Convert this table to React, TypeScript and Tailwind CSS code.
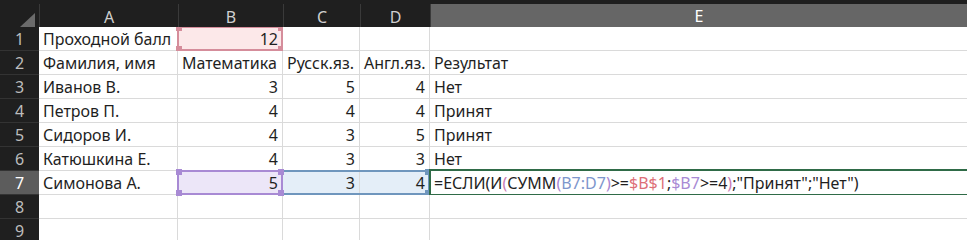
import React from "react";

const cols = ["A", "B", "C", "D", "E"];

type Hl = "pink" | "purple" | "blueL" | "blueR" | "active" | undefined;

const rows: string[][] = [
    ["Проходной балл", "12", "", "", ""],
    ["Фамилия, имя", "Математика", "Русск.яз.", "Англ.яз.", "Результат"],
    ["Иванов В.", "3", "5", "4", "Нет"],
    ["Петров П.", "4", "4", "4", "Принят"],
    ["Сидоров И.", "4", "3", "5", "Принят"],
    ["Катюшкина Е.", "4", "3", "3", "Нет"],
    ["Симонова А.", "5", "3", "4", "formula"],
    ["", "", "", "", ""],
    ["", "", "", "", ""],
];

// which cells carry a range highlight, keyed "row-col"
const highlights: Record<string, Hl> = {
    "0-1": "pink",
    "6-1": "purple",
    "6-2": "blueL",
    "6-3": "blueR",
    "6-4": "active",
};

function Formula() {
    return (
        <span>
            =ЕСЛИ(И<span className="text-[#c97bb6]">(</span>СУММ<span className="text-[#a985d2]">(</span>
            <span className="text-[#7d96cc]">B7:D7</span>
            <span className="text-[#a985d2]">)</span>&gt;=<span className="text-[#dd6f78]">$B$1</span>;
            <span className="text-[#a88ad4]">$B7</span>&gt;=4<span className="text-[#c97bb6]">)</span>;"Принят";"Нет")
        </span>
    );
}

function Handles({ color, left = true }: { color: string; left?: boolean }) {
    const h = "absolute w-[6px] h-[6px] " + color;
    return (
        <>
            {left && <div className={h + " -left-[3px] -top-[3px]"} />}
            <div className={h + " -right-[3px] -top-[3px]"} />
            {left && <div className={h + " -left-[3px] -bottom-[3px]"} />}
            <div className={h + " -right-[3px] -bottom-[3px]"} />
        </>
    );
}

function Cell({ value, hl, last }: { value: string; hl: Hl; last: boolean }) {
    const num = /^\d+$/.test(value);
    const bg =
        hl === "pink" ? "bg-[#fce8e9]" :
        hl === "purple" ? "bg-[#ece6f8]" :
        hl === "blueL" || hl === "blueR" ? "bg-[#e4eef8]" : "bg-white";
    return (
        <div
            className={
                "relative h-[24px] flex items-center px-[4px] border-b border-[#dadada] whitespace-nowrap " +
                (last ? "" : "border-r ") +
                (num ? "justify-end " : "justify-start ") +
                bg
            }
        >
            {value === "formula" ? <Formula /> : <span className="relative z-10">{value}</span>}
            {hl === "pink" && (
                <div className="absolute -left-px -top-px -right-px -bottom-px border-2 border-[#d58d9b]">
                    <Handles color="bg-[#d58d9b]" />
                </div>
            )}
            {hl === "purple" && (
                <div className="absolute -left-px -top-px -right-px -bottom-px border-2 border-[#a88ad4] z-20">
                    <Handles color="bg-[#a88ad4]" />
                </div>
            )}
            {hl === "blueL" && (
                <div className="absolute left-0 -top-px -right-px -bottom-px border-y-2 border-[#6f96bd]" />
            )}
            {hl === "blueR" && (
                <div className="absolute -left-px -top-px -right-px -bottom-px border-y-2 border-r-2 border-[#6f96bd]">
                    <Handles color="bg-[#6f96bd]" left={false} />
                </div>
            )}
            {hl === "active" && (
                <div className="absolute -left-px -top-[2px] -right-[6px] -bottom-[2px] border-2 border-[#2f6b47]" />
            )}
        </div>
    );
}

export default function App() {
    return (
        <div className="w-[967px] h-[240px] overflow-hidden bg-white font-['Noto_Sans',sans-serif] text-[16px] text-[#1f1f1f]">
            {/* column headers */}
            <div className="h-[27px] bg-[#1f1f1f] pt-[4px] grid grid-cols-[39px_139px_105px_77px_70px_1fr]">
                <div className="flex items-end justify-end pr-[4px] pb-[3px]">
                    <div className="w-0 h-0 border-l-[15px] border-l-transparent border-b-[14px] border-b-[#6b6b6b]" />
                </div>
                {cols.map(c => (
                    <div
                        key={c}
                        className={
                            "flex items-center justify-center text-[16px] border-l border-[#3a3a3a] " +
                            (c === "E" ? "bg-[#666666] text-white border-b-2 border-b-[#2f7a52]" : "text-[#cfcfcf]")
                        }
                    >
                        {c}
                    </div>
                ))}
            </div>

            {/* rows */}
            <div className="grid grid-cols-[39px_139px_105px_77px_70px_1fr] overflow-hidden">
                {rows.map((r, i) => (
                    <React.Fragment key={i}>
                        <div
                            className={
                                "h-[24px] flex items-center justify-center border-b border-[#333] " +
                                (i === 6 ? "bg-[#5c5c5c] text-white" : "bg-[#1f1f1f] text-[#bdbdbd]")
                            }
                        >
                            {i + 1}
                        </div>
                        {r.map((v, j) => (
                            <Cell key={j} value={v} hl={highlights[i + "-" + j]} last={j === 4} />
                        ))}
                    </React.Fragment>
                ))}
            </div>
        </div>
    );
}
